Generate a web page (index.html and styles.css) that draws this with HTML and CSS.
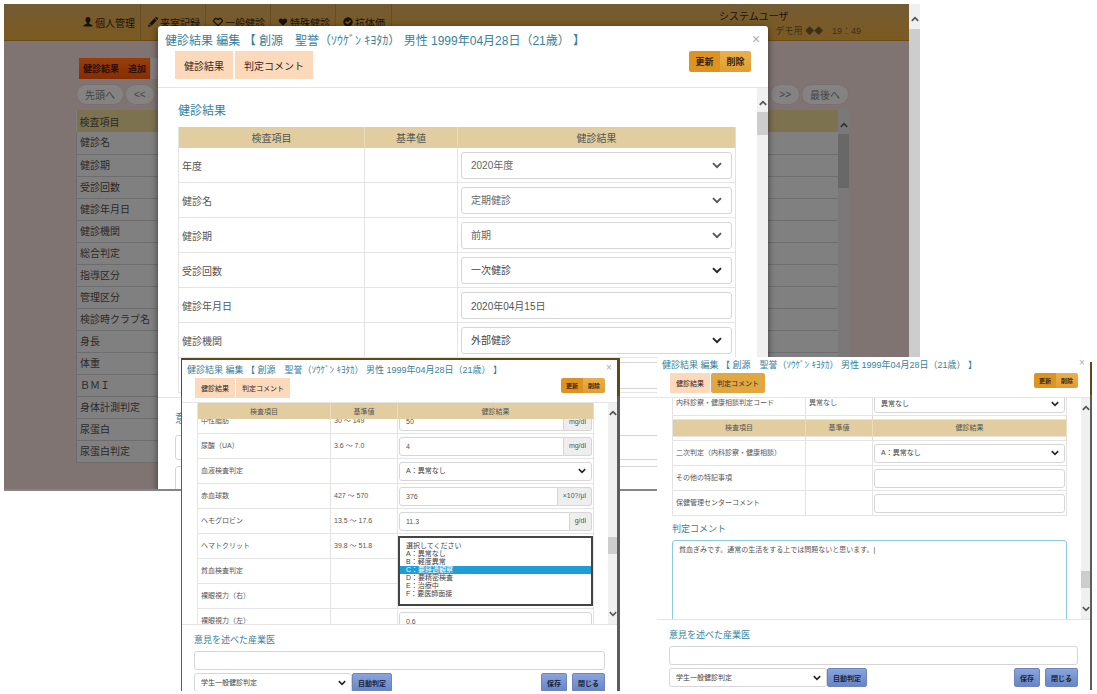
FILE: index.html
```html
<!DOCTYPE html>
<html lang="ja">
<head>
<meta charset="utf-8">
<title>健診結果 編集</title>
<link rel="stylesheet" href="styles.css">
</head>
<body>
<svg class="defs" aria-hidden="true">
  <symbol id="down" viewBox="0 0 10 7"><path d="M1 1.2 5 5.2 9 1.2" fill="none" stroke="currentColor" stroke-width="1.9"/></symbol>
  <symbol id="up" viewBox="0 0 10 7"><path d="M1 5.8 5 1.8 9 5.8" fill="none" stroke="currentColor" stroke-width="2.2"/></symbol>
  <symbol id="heart" viewBox="0 0 16 16"><path d="M8 14 2.2 8.2C-.6 5 3.800 -.2 8 4.200 12.200-.2 16.600 5 13.800 8.200Z"/></symbol>
</svg>
<main class="desk">

<section class="shot shot-main">
  <div class="app">
    <header class="topbar">
      <nav class="menu">
        <a href="#"><svg viewBox="0 0 16 16"><path d="M8 0c2.600 0 4 1.900 4 4.400C12 6.600 11 8 10 9v1.300c0 .8 5.500 1.600 5.500 4.700H.5C.5 11.900 6 11.100 6 10.300V9C5 8 4 6.600 4 4.400 4 1.900 5.400 0 8 0Z"/></svg>個人管理</a>
        <a href="#"><svg viewBox="0 0 16 16"><path d="m0 16 1.200-4.800 3.600 3.600ZM2.200 10.200 10.400 2l3.600 3.600-8.200 8.200ZM11.300 1.100 12.400 0c.6-.4 1.200-.3 1.700.1l1.800 1.800c.4.500.4 1.100 0 1.700l-1.100 1.100Z"/></svg>来室記録</a>
        <a href="#"><svg viewBox="0 0 16 16" class="line"><use href="#heart"/></svg>一般健診</a>
        <a href="#"><svg viewBox="0 0 16 16"><use href="#heart"/></svg>特殊健診</a>
        <a href="#"><svg viewBox="0 0 16 16"><path fill-rule="evenodd" d="M8 .5a7.500 7.500 0 1 0 .01 0ZM7.300 12 3.500 8.200l1.700-1.700 2.100 2.100 3.900-3.900 1.700 1.700Z"/></svg>抗体価</a>
      </nav>
      <div class="who"><span>システムユーザ</span><span class="clock">デモ用 ◆◆　19：49</span></div>
    </header>
    <div class="content">
      <div class="tools"><button class="add">健診結果　追加</button><button class="blank" aria-label="その他"></button></div>
      <div class="pager">
        <button>先頭へ</button><button>&lt;&lt;</button>
        <span class="spring"></span>
        <button>&gt;&gt;</button><button>最後へ</button>
      </div>
      <div class="listing">
        <table class="list">
          <thead><tr><th>検査項目</th></tr></thead>
          <tbody>
            <tr><td>健診名</td></tr><tr><td>健診期</td></tr><tr><td>受診回数</td></tr><tr><td>健診年月日</td></tr>
            <tr><td>健診機関</td></tr><tr><td>総合判定</td></tr><tr><td>指導区分</td></tr><tr><td>管理区分</td></tr>
            <tr><td>検診時クラブ名</td></tr><tr><td>身長</td></tr><tr><td>体重</td></tr><tr><td>ＢＭＩ</td></tr>
            <tr><td>身体計測判定</td></tr><tr><td>尿蛋白</td></tr><tr><td>尿蛋白判定</td></tr>
          </tbody>
        </table>
        <div class="bar bar-dim"><svg class="arrow"><use href="#up"/></svg><i></i></div>
      </div>
    </div>
  </div>
  <div class="bar bar-page"><svg class="arrow"><use href="#up"/></svg><i></i></div>

  <div class="dialog large">
    <header class="head">
      <div class="caption"><h1>健診結果 編集 【 創源　聖誉（ｿｳｹﾞﾝ ｷﾖﾀｶ） 男性 1999年04月28日（21歳） 】</h1><button class="close" aria-label="閉じる">×</button></div>
      <div class="actions">
        <div class="tabs"><button>健診結果</button><button>判定コメント</button></div>
        <div class="pair"><button class="strong">更新</button><button>削除</button></div>
      </div>
    </header>
    <div class="body">
      <div class="pane">
        <h2>健診結果</h2>
        <table class="grid">
          <colgroup><col class="c1"><col class="c2"><col></colgroup>
          <thead><tr><th>検査項目</th><th>基準値</th><th>健診結果</th></tr></thead>
          <tbody>
            <tr><td><label for="m1">年度</label></td><td></td><td><div class="sel soft"><select id="m1"><option>2020年度</option></select><svg><use href="#down"/></svg></div></td></tr>
            <tr><td><label for="m2">健診名</label></td><td></td><td><div class="sel soft"><select id="m2"><option>定期健診</option></select><svg><use href="#down"/></svg></div></td></tr>
            <tr><td><label for="m3">健診期</label></td><td></td><td><div class="sel soft"><select id="m3"><option>前期</option></select><svg><use href="#down"/></svg></div></td></tr>
            <tr><td><label for="m4">受診回数</label></td><td></td><td><div class="sel"><select id="m4"><option>一次健診</option></select><svg><use href="#down"/></svg></div></td></tr>
            <tr><td><label for="m5">健診年月日</label></td><td></td><td><input class="field" id="m5" value="2020年04月15日"></td></tr>
            <tr><td><label for="m6">健診機関</label></td><td></td><td><div class="sel"><select id="m6"><option>外部健診</option></select><svg><use href="#down"/></svg></div></td></tr>
            <tr><td></td><td></td><td><input class="field" aria-label="検査値"></td></tr>
          </tbody>
        </table>
      </div>
      <div class="bar"><svg class="arrow"><use href="#up"/></svg><i></i></div>
    </div>
    <footer class="foot">
      <h2><label for="m7">意見を述べた産業医</label></h2>
      <input class="field" id="m7">
      <input class="field" aria-label="判定">
    </footer>
  </div>
</section>

<section class="shot shot-left">
  <div class="dialog small">
    <header class="head">
      <div class="caption"><h1>健診結果 編集 【 創源　聖誉（ｿｳｹﾞﾝ ｷﾖﾀｶ） 男性 1999年04月28日（21歳） 】</h1><button class="close" aria-label="閉じる">×</button></div>
      <div class="actions">
        <div class="tabs"><button>健診結果</button><button>判定コメント</button></div>
        <div class="pair"><button class="strong">更新</button><button>削除</button></div>
      </div>
    </header>
    <div class="body">
      <div class="pane">
        <table class="grid">
          <colgroup><col class="c1"><col class="c2"><col></colgroup>
          <thead><tr><th>検査項目</th><th>基準値</th><th>健診結果</th></tr></thead>
          <tbody>
            <tr class="cut"><td><div><label for="l1">中性脂肪</label></div></td><td><div><span>30 ～ 149</span></div></td><td><div><div class="unit"><input class="field" id="l1" value="50"><span>mg/dl</span></div></div></td></tr>
            <tr><td><label for="l2">尿酸（UA）</label></td><td>3.6 ～ 7.0</td><td><div class="unit"><input class="field" id="l2" value="4"><span>mg/dl</span></div></td></tr>
            <tr><td><label for="l3">血液検査判定</label></td><td></td><td><div class="sel"><select id="l3"><option>A：異常なし</option></select><svg><use href="#down"/></svg></div></td></tr>
            <tr><td><label for="l4">赤血球数</label></td><td>427 ～ 570</td><td><div class="unit"><input class="field" id="l4" value="376"><span>×10?/μl</span></div></td></tr>
            <tr><td><label for="l5">ヘモグロビン</label></td><td>13.5 ～ 17.6</td><td><div class="unit"><input class="field" id="l5" value="11.3"><span>g/dl</span></div></td></tr>
            <tr><td>ヘマトクリット</td><td>39.8 ～ 51.8</td><td class="anchor">
              <ul class="options" role="listbox" aria-label="貧血検査判定">
                <li role="option">選択してください</li><li role="option">A：異常なし</li><li role="option">B：軽度異常</li>
                <li role="option" aria-selected="true">C：要経過観察</li><li role="option">D：要精密検査</li>
                <li role="option">E：治療中</li><li role="option">F：要医師面接</li>
              </ul></td></tr>
            <tr><td>貧血検査判定</td><td></td><td></td></tr>
            <tr><td>裸眼視力（右）</td><td></td><td></td></tr>
            <tr><td><label for="l6">裸眼視力（左）</label></td><td></td><td><input class="field" id="l6" value="0.6"></td></tr>
          </tbody>
        </table>
      </div>
      <div class="bar"><svg class="arrow"><use href="#up"/></svg><i></i><svg class="arrow"><use href="#down"/></svg></div>
    </div>
    <footer class="foot">
      <h2><label for="l7">意見を述べた産業医</label></h2>
      <input class="field" id="l7">
      <div class="row">
        <div class="sel"><select aria-label="判定種別"><option>学生一般健診判定</option></select><svg><use href="#down"/></svg></div><button class="blue joined">自動判定</button>
        <span class="spring"></span>
        <button class="blue">保存</button><button class="blue">閉じる</button>
      </div>
    </footer>
  </div>
</section>

<section class="shot shot-right">
  <div class="dialog small">
    <header class="head">
      <div class="caption"><h1>健診結果 編集 【 創源　聖誉（ｿｳｹﾞﾝ ｷﾖﾀｶ） 男性 1999年04月28日（21歳） 】</h1><button class="close" aria-label="閉じる">×</button></div>
      <div class="actions">
        <div class="tabs"><button>健診結果</button><button class="active">判定コメント</button></div>
        <div class="pair"><button class="strong">更新</button><button>削除</button></div>
      </div>
    </header>
    <div class="body">
      <div class="pane">
        <table class="grid">
          <colgroup><col class="c1"><col class="c2"><col></colgroup>
          <tbody>
            <tr class="cut"><td><div><label for="r1">内科診察・健康相談判定コード</label></div></td><td><div><span>異常なし</span></div></td><td><div><div class="sel"><select id="r1"><option>異常なし</option></select><svg><use href="#down"/></svg></div></div></td></tr>
            <tr class="float-head"><th><div>検査項目</div></th><th><div>基準値</div></th><th><div>健診結果</div></th></tr>
            <tr><td><label for="r2">二次判定（内科診察・健康相談）</label></td><td></td><td><div class="sel"><select id="r2"><option>A：異常なし</option></select><svg><use href="#down"/></svg></div></td></tr>
            <tr><td><label for="r3">その他の特記事項</label></td><td></td><td><input class="field" id="r3"></td></tr>
            <tr><td><label for="r4">保健管理センターコメント</label></td><td></td><td><input class="field" id="r4"></td></tr>
          </tbody>
        </table>
        <h2><label for="r5">判定コメント</label></h2>
        <textarea id="r5">貧血ぎみです。通常の生活をする上では問題ないと思います。|</textarea>
      </div>
      <div class="bar"><svg class="arrow"><use href="#up"/></svg><i></i><svg class="arrow"><use href="#down"/></svg></div>
    </div>
    <footer class="foot">
      <h2><label for="r6">意見を述べた産業医</label></h2>
      <input class="field" id="r6">
      <div class="row">
        <div class="sel"><select aria-label="判定種別"><option>学生一般健診判定</option></select><svg><use href="#down"/></svg></div><button class="blue joined">自動判定</button>
        <span class="spring"></span>
        <button class="blue">保存</button><button class="blue">閉じる</button>
      </div>
    </footer>
  </div>
</section>
</main>
</body>
</html>
```
FILE: styles.css
```css
* { box-sizing: border-box; }
body {
  margin: 0;
  background: #fff;
  color: #555;
  font-family: "Liberation Sans", "Noto Sans CJK JP", sans-serif;
}
h1, h2, ul { margin: 0; padding: 0; font-weight: 400; }
button, input, select, textarea { font: inherit; color: inherit; margin: 0; min-width: 0; }
button { border: 0; padding: 0; white-space: nowrap; }
.defs { position: absolute; width: 0; height: 0; }
.spring { flex: 1; }

/* Overlapping windows */
.desk { position: relative; min-height: 100vh; overflow: hidden; }
.shot { position: absolute; overflow: hidden; }
.shot-main { left: 4px; top: 4px; width: 916px; height: 487px; display: flex; border-bottom: 2px solid #858585; }
.shot-left { left: 181px; top: 358px; width: 439px; height: 333px; padding: 2px 3px 0 1px; background: linear-gradient(#614718 0 38px, #5c5c5c 38px); }
.shot-right { left: 657px; top: 357px; width: 435px; height: 333px; padding-right: 2px; background: linear-gradient(#fff 0 5px, #614718 5px 38px, #5c5c5c 38px); }

/* Dimmed application behind the dialog */
.app { flex: 1; background: #7f7472; color: #2c2827; font-size: 10px; }
.topbar { display: flex; justify-content: space-between; height: 37px; padding: 0 48px 0 72px; background: linear-gradient(#735b33, #7c5a20); border-bottom: 1px solid #684a18; }
.menu { display: flex; }
.menu a { display: flex; align-items: center; gap: 2px; width: 65px; padding-left: 7px; border-right: 1px solid #664e24; color: #18120b; text-decoration: none; white-space: nowrap; }
.menu a:last-child { width: 56px; }
.menu svg { width: 10px; height: 10px; flex: none; fill: #18120b; }
.menu .line { fill: none; stroke: #18120b; stroke-width: 2; }
.who { display: flex; flex-direction: column; width: 142px; padding-top: 6px; line-height: 14px; color: #18120b; }
.clock { text-align: right; color: #3c301a; font-size: 9px; white-space: nowrap; }
.content { padding: 17px 60px 0 72px; }
.tools { display: flex; padding-left: 3px; gap: 1px; }
.add { width: 71px; height: 21px; background: linear-gradient(#973f0c, #872d04); color: #2a1006; font-size: 9px; font-weight: 700; }
.blank { width: 40px; background: #858080; }
.pager { display: flex; gap: 1px; padding: 5px 0; }
.pager button { height: 21px; padding: 0 8px; border-radius: 11px; border: 1px solid #79706f; background: #858282; color: #444; }
.listing { display: flex; }
.list { flex: 1; border-collapse: collapse; background: #808080; }
.list th { height: 22px; padding: 0 3px; text-align: left; font-weight: 400; background: #7c7250; }
.list td { height: 22px; padding: 0 3px; border-bottom: 1px solid #6d6d6d; border-left: 1px solid #6d6d6d; line-height: 15px; }

/* Scroll bars */
.bar { width: 11px; flex: none; display: flex; flex-direction: column; align-items: center; background: #f0f0f0; color: #555; }
.bar i { width: 100%; background: #cdcdcd; }
.arrow { width: 8px; height: 6px; }
.bar-page i { flex: 1; margin-top: 7px; }
.bar-page { padding-top: 12px; }
.bar-dim { background: #7a7878; color: #333; padding-top: 12px; }
.bar-dim i { height: 54px; margin-top: 6px; background: #686868; }

/* Dialog */
.dialog { display: flex; flex-direction: column; height: 100%; background: #fff; }
.head { flex: none; border-bottom: 1px solid #e5e5e5; }
.caption, .actions, .tabs, .pair, .row { display: flex; }
.caption, .actions { justify-content: space-between; }
.actions { align-items: flex-start; }
h1, h2 { color: #37829b; white-space: nowrap; }
.close { background: none; color: #aaa; }
.tabs button { background: #fcd9ba; color: #33261e; }
.tabs .active { background: #e0a743; border-radius: 2px; }
.pair { border-radius: 2px; overflow: hidden; }
.pair button { background: linear-gradient(#eab04d, #e09e33); color: #3a2508; font-weight: 700; }
.pair .strong { background: #dd9322; }
.body { flex: none; display: flex; overflow: hidden; }
.pane { flex: 1; min-width: 0; }
.grid { width: 100%; table-layout: fixed; border-collapse: separate; border-spacing: 0; border-left: 1px solid #e4e4e4; }
.grid th { padding: 0; background: #e1cda0; border-right: 1px solid #eadcbc; font-weight: 400; }
.grid td { padding: 0 3px; border-right: 1px solid #e4e4e4; border-bottom: 1px solid #e4e4e4; white-space: nowrap; }
.field, .sel select, textarea { width: 100%; border: 1px solid #d6d6d6; border-radius: 3px; background: #fff; outline: 0; }
.field, .sel select { display: block; }
.sel { display: grid; align-items: center; color: #444; }
.sel select { grid-area: 1 / 1; appearance: none; }
.sel svg { grid-area: 1 / 1; justify-self: end; pointer-events: none; color: #222; }
.soft { color: #666; }
.soft svg { color: #555; }
.foot { flex: 1; display: flex; flex-direction: column; border-top: 1px solid #e5e5e5; }

/* Full-size dialog */
.large { position: absolute; left: 154px; top: 22px; width: 610px; font-size: 10px; border-radius: 3px; box-shadow: 0 2px 7px rgba(0, 0, 0, .55); }
.large .head { height: 62px; padding: 6px 17px 0 7px; }
.large h1, .large h2 { font-size: 12px; line-height: 19px; }
.large .close { width: 10px; height: 14px; margin-right: -10px; font-size: 14px; line-height: 12px; }
.large .actions { padding-left: 10px; }
.large .tabs { gap: 2px; }
.large .tabs button { height: 28px; padding: 0 9px; }
.large .pair button { width: 31px; height: 21px; font-size: 9px; }
.large .body { height: 309px; }
.large .pane { padding: 14px 21px 0 20px; }
.large .c1 { width: 186px; }
.large .c2 { width: 93px; }
.large .grid { margin-top: 6px; }
.large .grid th { height: 21px; }
.large .grid td { height: 35px; }
.large .field, .large .sel select { height: 27px; padding: 0 9px; }
.large .sel svg { width: 10px; height: 7px; margin-right: 10px; }
.large .bar { padding-top: 12px; }
.large .bar i { height: 23px; margin-top: 6px; }
.large .foot { gap: 6px; padding: 12px 17px; }
.large .foot .field { height: 25px; }

/* Reduced dialogs */
.small { font-size: 7px; }
.small .head { height: 43px; padding: 2px 12px 0 5px; }
.small h1, .small h2 { font-size: 9px; line-height: 16px; }
.small .close { width: 8px; height: 12px; margin-right: -8px; font-size: 10px; line-height: 12px; }
.small .actions { padding-left: 8px; }
.small .tabs { gap: 1px; }
.small .tabs button { height: 20px; padding: 0 6px; }
.small .pair button { width: 22px; height: 15px; font-size: 6px; }
.small .body { height: 221px; }
.small .pane { padding: 0 14px 0 15px; }
.small .c1 { width: 133px; }
.small .c2 { width: 67px; }
.small .grid th { height: 16px; }
.small .grid td { height: 25px; line-height: 12px; }
.small .grid td:last-child { padding: 0 1px; }
.small .field, .small .sel select { height: 19px; padding: 0 6px; }
.small .sel svg { width: 8px; height: 6px; margin-right: 6px; }
.unit { display: flex; width: 100%; }
.unit .field { flex: 1; border-radius: 3px 0 0 3px; }
.unit span { display: flex; align-items: center; padding: 0 5px; background: #eee; border: 1px solid #d6d6d6; border-left: 0; border-radius: 0 3px 3px 0; }
.small .grid .cut td { height: 15px; }
.cut td > div { display: flex; align-items: flex-end; height: 14px; overflow: hidden; line-height: 25px; }
.cut td > div > div { flex: 1; margin-bottom: 2px; line-height: 12px; }
.small .bar { width: 9px; padding: 7px 0; }
.small .bar i { height: 17px; margin: auto 0 57px; }
.anchor { position: relative; }
.options { position: absolute; left: 0; right: 0; top: 2px; padding: 4px 0 6px; background: #fff; border: 2px solid #444; list-style: none; font-size: 7px; line-height: 8px; color: #444; z-index: 1; }
.options li { padding-left: 6px; }
.options [aria-selected] { background: #1f9ed6; color: #fff; }
.small .foot { gap: 3px; padding: 7px 12px 0; }
.row .sel { width: 158px; }
.blue { height: 19px; margin-left: 5px; padding: 0 5px; border-radius: 2px; background: linear-gradient(#8aa5dc, #6885c4); border: 1px solid #6c86bd; color: #16223c; font-weight: 700; }
.joined { margin-left: 0; }

.shot-right .head { height: 41px; padding-top: 0; }
.shot-right .cut td { height: 18px; }
.shot-right .cut td > div { height: 17px; }
.shot-right .grid .float-head th { height: 25px; padding: 4px 0; background: none; border-bottom: 1px solid #e4e4e4; }
.float-head div { height: 16px; line-height: 16px; background: #e1cda0; box-shadow: 0 1px 0 #e8e4dc, 0 -1px 0 #e8e4dc; }
.shot-right .pane h2 { padding: 5px 0 3px; }
textarea { display: block; height: 110px; padding: 3px 6px; border-color: #8cc8e0; resize: none; font-size: 7px; line-height: 12px; }
.shot-right .bar i { margin-bottom: 18px; }
```
